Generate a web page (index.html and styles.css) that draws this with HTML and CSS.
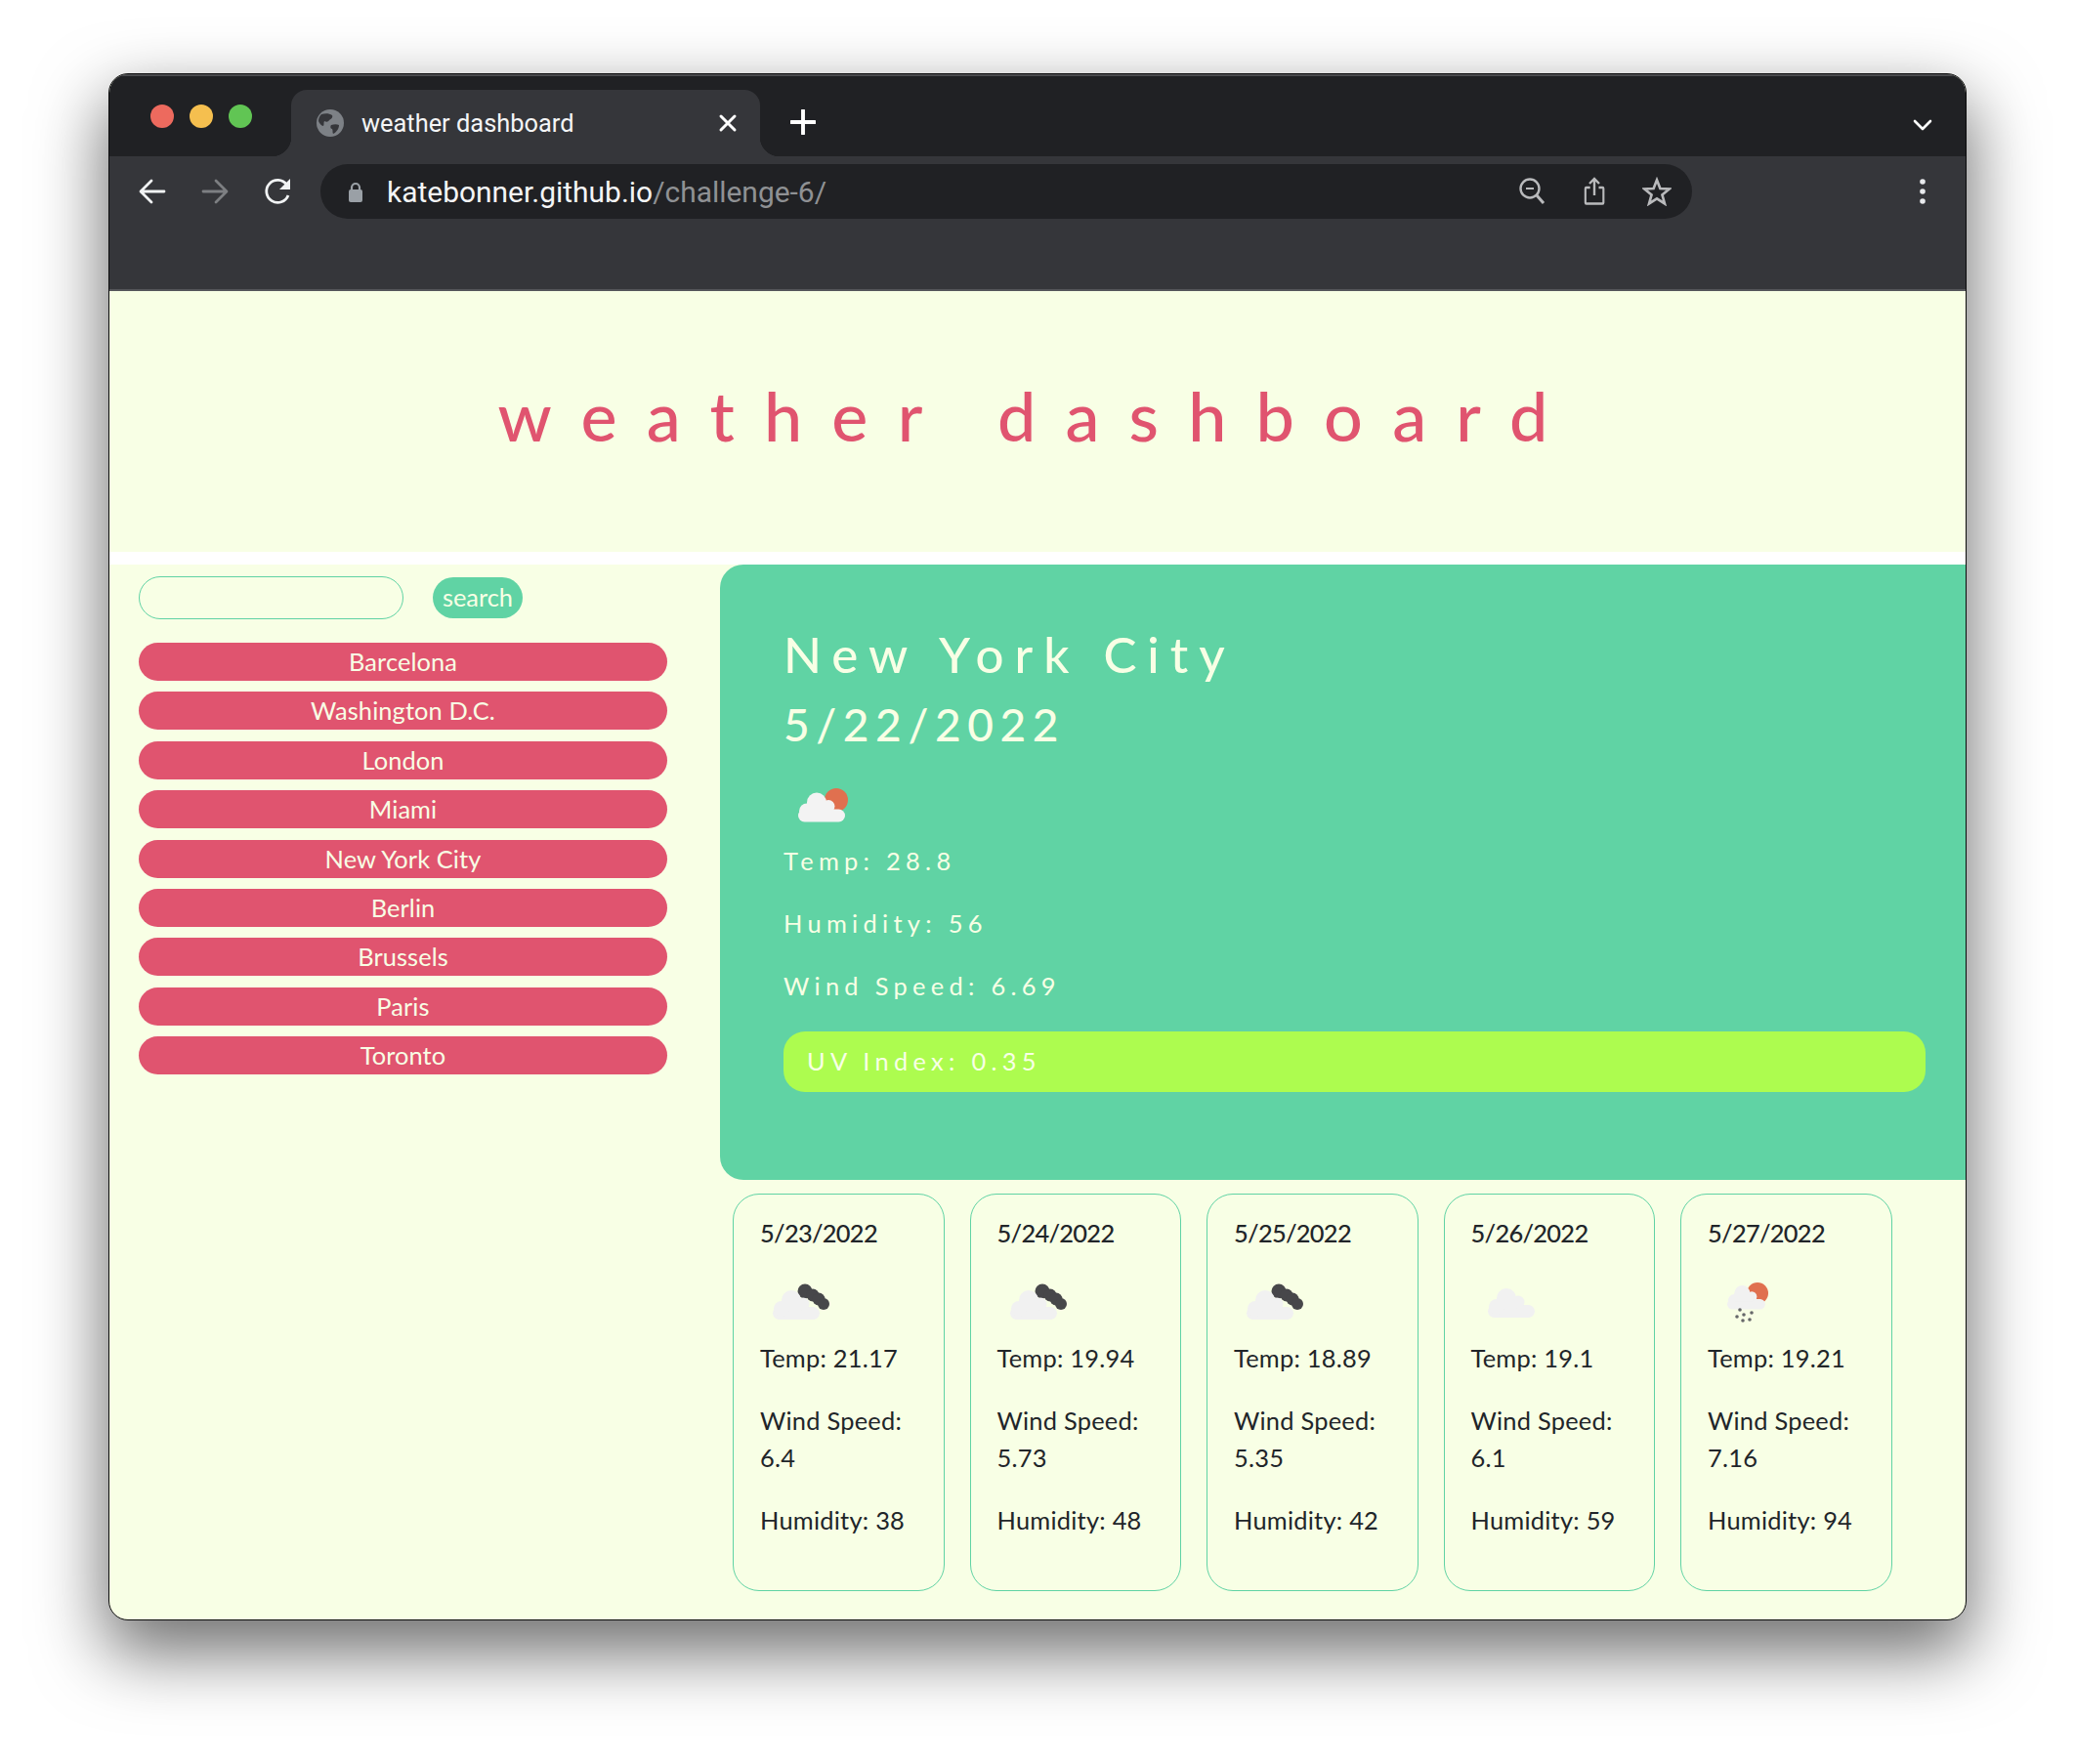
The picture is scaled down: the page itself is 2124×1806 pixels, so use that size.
FILE: index.html
```html
<!DOCTYPE html>
<html lang="en">
<head>
<meta charset="utf-8">
<title>weather dashboard</title>
<link rel="stylesheet" href="styles.css">
</head>
<body>
<svg class="sprites" width="0" height="0" aria-hidden="true">
  <defs>
    <g id="cloud-shape">
      <rect x="0" y="17" width="48" height="13" rx="6.5"/>
      <circle cx="19" cy="10" r="10"/>
      <circle cx="31" cy="14" r="6.5"/>
      <circle cx="9" cy="19" r="8"/>
      <rect x="9" y="10" width="24" height="10"/>
    </g>
    <symbol id="icon-sun" viewBox="0 0 68 68">
      <circle cx="52" cy="29" r="12" fill="#e0704f"/>
      <use href="#cloud-shape" fill="#f3f3f3" transform="translate(13 21.500)"/>
    </symbol>
    <symbol id="icon-dark" viewBox="0 0 68 68">
      <g fill="#47474a">
        <circle cx="44" cy="24" r="7.500"/>
        <circle cx="52" cy="28" r="6.500"/>
        <circle cx="58" cy="32" r="6.500"/>
        <circle cx="63" cy="37" r="6"/>
      </g>
      <use href="#cloud-shape" fill="#f1f1f1" transform="translate(11 23)"/>
    </symbol>
    <symbol id="icon-cloud" viewBox="0 0 68 68">
      <use href="#cloud-shape" fill="#f1f1f1" transform="translate(15 21)"/>
    </symbol>
    <symbol id="icon-rain" viewBox="0 0 68 68">
      <circle cx="49" cy="26" r="11" fill="#e0704f"/>
      <use href="#cloud-shape" fill="#f1f1f1" transform="translate(18 18) scale(.81 .82)"/>
      <g fill="#66686a">
        <circle cx="31" cy="43" r="1.800"/><circle cx="28" cy="50" r="1.800"/><circle cx="35" cy="48" r="1.800"/>
        <circle cx="43" cy="46" r="1.800"/><circle cx="34" cy="54" r="1.800"/><circle cx="41" cy="53" r="1.800"/>
      </g>
    </symbol>
  </defs>
</svg>

<div class="window">
  <div class="tabstrip">
    <div class="lights">
      <span class="light light-red"></span>
      <span class="light light-yellow"></span>
      <span class="light light-green"></span>
    </div>
    <div class="tab">
      <svg class="globe" viewBox="0 0 28 28">
        <circle cx="14" cy="14" r="14" fill="#7d8186"/>
        <path d="M5 5c4-1 8-1 11 1 1 2-1 4-3 5-1 2-3 2-5 1-1 2 0 3-1 5-2 0-4-3-5-5 0-3 1-5 3-7z" fill="#35363a"/>
        <path d="M15 16c3-1 6-1 8 0 0 3-2 7-6 9-1-2 0-3-1-5-2 0-2-3-1-4z" fill="#35363a"/>
      </svg>
      <span class="tab-title">weather dashboard</span>
      <svg class="tab-close" viewBox="0 0 20 20"><path d="M3 3l14 14M17 3L3 17" stroke="#fff" stroke-width="3" stroke-linecap="round"/></svg>
    </div>
    <svg class="new-tab" viewBox="0 0 24 24"><path d="M12 1v22M1 12h22" stroke="#fff" stroke-width="3.600" stroke-linecap="round"/></svg>
    <svg class="tab-menu" viewBox="0 0 24 24"><path d="M4 8l8 8 8-8" fill="none" stroke="#fff" stroke-width="2.600" stroke-linecap="round" stroke-linejoin="round"/></svg>
  </div>

  <div class="toolbar">
    <div class="nav">
      <svg class="tool" viewBox="0 0 32 32"><path d="M28 16H5M15 5L4 16l11 11" fill="none" stroke="#f1f3f4" stroke-width="2.800" stroke-linecap="round" stroke-linejoin="round"/></svg>
      <svg class="tool" viewBox="0 0 32 32"><path d="M3 16h23M16 5l11 11-11 11" fill="none" stroke="#7d7f82" stroke-width="2.800" stroke-linecap="round" stroke-linejoin="round"/></svg>
      <svg class="tool" viewBox="0 0 32 32"><path d="M26 20a11.500 11.500 0 1 1-1.500-11" fill="none" stroke="#f1f3f4" stroke-width="2.800"/><path d="M28 3v11H17z" fill="#f1f3f4"/></svg>
    </div>
    <div class="address">
      <svg class="lock" viewBox="0 0 24 24"><path d="M8 11V8a4 4 0 0 1 8 0v3" fill="none" stroke="#9aa0a6" stroke-width="2.200"/><rect x="5" y="10" width="14" height="13" rx="2" fill="#9aa0a6"/></svg>
      <span class="url">katebonner.github.io<span class="url-path">/challenge-6/</span></span>
      <div class="address-icons">
        <svg class="tool" viewBox="0 0 32 32"><circle cx="14" cy="13" r="9.500" fill="none" stroke="#b9babc" stroke-width="2.400"/><path d="M10 13h8" stroke="#b9babc" stroke-width="2"/><path d="M21 20l7 8" stroke="#b9babc" stroke-width="3"/></svg>
        <svg class="tool" viewBox="0 0 32 32"><path d="M11 12H6.500a1 1 0 0 0-1 1v14.500a1 1 0 0 0 1 1h19a1 1 0 0 0 1-1V13a1 1 0 0 0-1-1H21" transform="translate(2 0) scale(.88 1)" fill="none" stroke="#b9babc" stroke-width="2.400"/><path d="M16 20V3M11 8l5-5 5 5" fill="none" stroke="#b9babc" stroke-width="2.400"/></svg>
        <svg class="tool star" viewBox="0 0 32 32"><path d="M16 3.500l3.600 9.300 10 .5-7.800 6.300 2.700 9.700-8.500-5.500-8.500 5.500 2.700-9.700-7.800-6.300 10-.5z" fill="none" stroke="#b9babc" stroke-width="2.800"/></svg>
      </div>
    </div>
    <svg class="tool kebab" viewBox="0 0 32 32"><circle cx="16" cy="6" r="2.800" fill="#e8eaed"/><circle cx="16" cy="16" r="2.800" fill="#e8eaed"/><circle cx="16" cy="26" r="2.800" fill="#e8eaed"/></svg>
  </div>

  <div class="page">
    <header class="hero"><h1>weather dashboard</h1></header>
    <main class="layout">
      <aside class="sidebar">
        <form class="search">
          <input class="search-input" type="text" aria-label="city">
          <button class="search-btn" type="button">search</button>
        </form>
        <div class="cities">
          <button class="city" type="button">Barcelona</button>
          <button class="city" type="button">Washington D.C.</button>
          <button class="city" type="button">London</button>
          <button class="city" type="button">Miami</button>
          <button class="city" type="button">New York City</button>
          <button class="city" type="button">Berlin</button>
          <button class="city" type="button">Brussels</button>
          <button class="city" type="button">Paris</button>
          <button class="city" type="button">Toronto</button>
        </div>
      </aside>
      <section class="content">
        <div class="current">
          <h2>New York City</h2>
          <h3>5/22/2022</h3>
          <svg class="wx"><use href="#icon-sun"/></svg>
          <p>Temp: 28.8</p>
          <p>Humidity: 56</p>
          <p>Wind Speed: 6.69</p>
          <p class="uv">UV Index: 0.35</p>
        </div>
        <div class="forecast">
          <article class="card">
            <h4>5/23/2022</h4>
            <svg class="wx"><use href="#icon-dark"/></svg>
            <p>Temp: 21.17</p><p>Wind Speed: 6.4</p><p>Humidity: 38</p>
          </article>
          <article class="card">
            <h4>5/24/2022</h4>
            <svg class="wx"><use href="#icon-dark"/></svg>
            <p>Temp: 19.94</p><p>Wind Speed: 5.73</p><p>Humidity: 48</p>
          </article>
          <article class="card">
            <h4>5/25/2022</h4>
            <svg class="wx"><use href="#icon-dark"/></svg>
            <p>Temp: 18.89</p><p>Wind Speed: 5.35</p><p>Humidity: 42</p>
          </article>
          <article class="card">
            <h4>5/26/2022</h4>
            <svg class="wx"><use href="#icon-cloud"/></svg>
            <p>Temp: 19.1</p><p>Wind Speed: 6.1</p><p>Humidity: 59</p>
          </article>
          <article class="card">
            <h4>5/27/2022</h4>
            <svg class="wx"><use href="#icon-rain"/></svg>
            <p>Temp: 19.21</p><p>Wind Speed: 7.16</p><p>Humidity: 94</p>
          </article>
        </div>
      </section>
    </main>
  </div>
</div>
</body>
</html>
```
FILE: styles.css
```css
* { box-sizing: border-box; }
html, body { margin: 0; height: 100%; }
body {
  width: 2124px;
  height: 1806px;
  overflow: hidden;
  background: #fff;
  padding: 75px 111px 0;
  font-family: Lato, "Liberation Sans", sans-serif;
}
.sprites { position: absolute; }
.window {
  width: 1902px;
  height: 1584px;
  border: 1px solid #0b0b0c;
  border-radius: 20px;
  overflow: hidden;
  background: #f8ffe5;
  display: flex;
  flex-direction: column;
  box-shadow: 0 30px 70px 4px rgba(0, 0, 0, .56);
}

/* browser chrome */
.tabstrip {
  height: 84px;
  flex: none;
  background: #202124;
  border-top: 2px solid #4a4b4e;
  display: flex;
  padding: 0 32px 0 42px;
}
.lights { display: flex; gap: 16px; margin-top: 29px; }
.light { width: 24px; height: 24px; border-radius: 50%; }
.light-red { background: #ed6a5e; }
.light-yellow { background: #f5bf4f; }
.light-green { background: #61c554; }
.tab {
  position: relative;
  width: 480px;
  height: 68px;
  margin: 14px 0 0 40px;
  background: #35363a;
  border-radius: 16px 16px 0 0;
  display: flex;
  align-items: center;
  padding: 0 23px 0 26px;
  color: #fff;
}
.tab::before, .tab::after {
  content: "";
  position: absolute;
  bottom: 0;
  width: 20px;
  height: 20px;
}
.tab::before { left: -20px; background: radial-gradient(circle at 0 0, #202124 20px, #35363a 20.6px); }
.tab::after { right: -20px; background: radial-gradient(circle at 100% 0, #202124 20px, #35363a 20.6px); }
.globe { width: 28px; height: 28px; flex: none; }
.tab-title { margin-left: 18px; font: 25.400px Roboto, sans-serif; color: #f4f5f6; }
.tab-close { width: 20px; height: 20px; margin-left: auto; }
.new-tab { width: 26px; height: 26px; margin: 34px 0 0 31px; }
.tab-menu { width: 24px; height: 24px; margin: 38px 0 0 auto; }
.toolbar {
  height: 136px;
  flex: none;
  background: #35363a;
  display: flex;
  align-items: flex-start;
  padding: 8px 28px 0 28px;
}
.nav { display: flex; gap: 32.500px; align-items: center; height: 56px; }
.tool { width: 32px; height: 32px; flex: none; }
.star { width: 30px; height: 30px; margin-left: 2px; }
.address {
  width: 1404px;
  height: 56px;
  margin-left: 27px;
  background: #202124;
  border-radius: 28px;
  display: flex;
  align-items: center;
  padding: 0 21px 0 24px;
}
.lock { width: 24px; height: 24px; flex: none; }
.url { margin-left: 20px; font: 29.950px Roboto, sans-serif; color: #f4f5f6; }
.url-path { color: #8f9194; }
.address-icons { display: flex; gap: 31.500px; align-items: center; margin-left: auto; }
.kebab { margin: 12px 0 0 auto; }

/* page */
.page {
  flex: 1;
  border-top: 2px solid #55565a;
  display: flex;
  flex-direction: column;
  color: #212529;
  font-size: 25.400px;
  line-height: 38px;
}
.hero {
  height: 280px;
  flex: none;
  padding-bottom: 14px;
  border-bottom: 13px solid #fff;
  display: flex;
  align-items: center;
  justify-content: center;
}
h1 {
  margin: 0;
  font-size: 70px;
  font-weight: 500;
  line-height: 80px;
  letter-spacing: 30.200px;
  color: #e0546f;
}
.layout { flex: 1; display: flex; }
.sidebar { width: 625px; flex: none; padding: 12px 0 0 30px; }
.search { display: flex; align-items: center; }
.search-input {
  width: 271px;
  height: 44px;
  border: 1px solid #60d3a4;
  border-radius: 22px;
  background: #f8ffe5;
}
.search-btn {
  width: 92px;
  height: 42px;
  margin-left: 30px;
  padding: 0 0 3px;
  border: 0;
  border-radius: 21px;
  background: #60d3a4;
  color: #f8ffe5;
  font: inherit;
}
.cities {
  width: 541px;
  margin-top: 24px;
  display: flex;
  flex-direction: column;
  gap: 11.400px;
}
.city {
  height: 39px;
  padding: 0 0 6px;
  border: 0;
  border-radius: 20px;
  background: #e0546f;
  color: #f8ffe5;
  font: inherit;
  letter-spacing: .1px;
}
.content { flex: 1; min-width: 0; }
.current {
  background: #60d3a4;
  color: #f8ffe5;
  border-radius: 24px 0 0 24px;
  padding: 62px 41px 90px 65px;
}
h2 {
  margin: 0 0 14px;
  font-size: 51px;
  font-weight: 500;
  line-height: 60px;
  letter-spacing: 11px;
}
h3 {
  margin: 0 0 21px;
  font-size: 46px;
  font-weight: 500;
  line-height: 55px;
  letter-spacing: 6.600px;
}
.wx { display: block; width: 72px; height: 68px; margin-bottom: 4px; overflow: visible; }
.wx use { width: 68px; height: 68px; }
.current p { margin: 0 0 26px; letter-spacing: 5.300px; }
.current .uv {
  margin: 27.500px 0 0;
  height: 62px;
  padding: 11px 24px;
  border-radius: 22px;
  background: #adfc4f;
}
.forecast { display: flex; gap: 26px; padding: 14px 0 0 13px; }
.card {
  width: 216.500px;
  height: 407px;
  flex: none;
  border: 1px solid #60d3a4;
  border-radius: 27px;
  padding: 20px 18px 0 27px;
}
.card .wx { margin-bottom: 5px; }
h4 { margin: 0 0 17px; font: inherit; font-weight: 500; letter-spacing: -.7px; }
.card p { margin: 0 0 26px; letter-spacing: .25px; }
```
